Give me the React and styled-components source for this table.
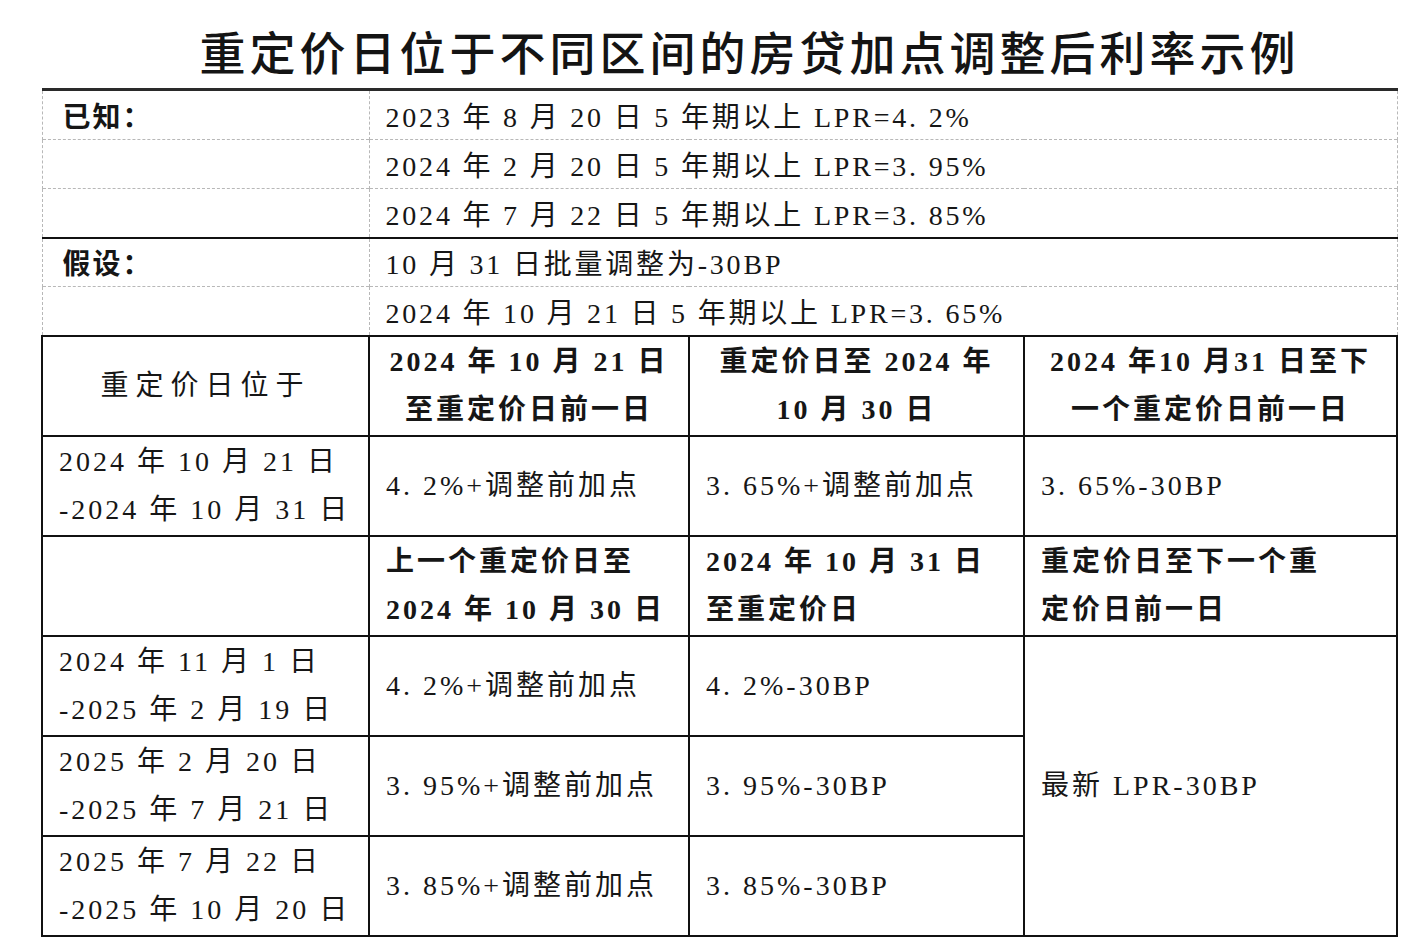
import React from "react";
import styled, { createGlobalStyle } from "styled-components";

const GlobalStyle = createGlobalStyle`
  html, body {
    margin: 0;
    padding: 0;
    background: #ffffff;
  }
  body {
    font-family: "Liberation Serif", "Noto Sans CJK SC", serif;
    color: #161616;
  }
`;

const known = [
  "2023 年 8 月 20 日 5 年期以上 LPR=4. 2%",
  "2024 年 2 月 20 日 5 年期以上 LPR=3. 95%",
  "2024 年 7 月 22 日 5 年期以上 LPR=3. 85%",
];

const assumed = ["10 月 31 日批量调整为-30BP", "2024 年 10 月 21 日 5 年期以上 LPR=3. 65%"];

function App() {
  return (
    <Page>
      <GlobalStyle />
      <Title>重定价日位于不同区间的房贷加点调整后利率示例</Title>
      <Sheet>
        <colgroup>
          <col style={{ width: 327 }} />
          <col style={{ width: 320 }} />
          <col style={{ width: 335 }} />
          <col style={{ width: 373 }} />
        </colgroup>
        <tbody>
          {known.map((text, i) => (
            <InfoRow key={text} $first={i === 0}>
              <LabelCell>{i === 0 ? "已知：" : ""}</LabelCell>
              <InfoCell colSpan={3}>{text}</InfoCell>
            </InfoRow>
          ))}
          {assumed.map((text, i) => (
            <InfoRow key={text} $strongTop={i === 0}>
              <LabelCell>{i === 0 ? "假设：" : ""}</LabelCell>
              <InfoCell colSpan={3}>{text}</InfoCell>
            </InfoRow>
          ))}

          <GridRow>
            <Cell $center $wide>重定价日位于</Cell>
            <Cell $center $bold>
              2024 年 10 月 21 日
              <br />
              至重定价日前一日
            </Cell>
            <Cell $center $bold>
              重定价日至 2024 年
              <br />
              10 月 30 日
            </Cell>
            <Cell $center $bold>
              2024 年10 月31 日至下
              <br />
              一个重定价日前一日
            </Cell>
          </GridRow>
          <GridRow>
            <Cell>
              2024 年 10 月 21 日
              <br />
              -2024 年 10 月 31 日
            </Cell>
            <Cell>4. 2%+调整前加点</Cell>
            <Cell>3. 65%+调整前加点</Cell>
            <Cell>3. 65%-30BP</Cell>
          </GridRow>
          <GridRow>
            <Cell />
            <Cell $bold>
              上一个重定价日至
              <br />
              2024 年 10 月 30 日
            </Cell>
            <Cell $bold>
              2024 年 10 月 31 日
              <br />
              至重定价日
            </Cell>
            <Cell $bold>
              重定价日至下一个重
              <br />
              定价日前一日
            </Cell>
          </GridRow>
          <GridRow>
            <Cell>
              2024 年 11 月 1 日
              <br />
              -2025 年 2 月 19 日
            </Cell>
            <Cell>4. 2%+调整前加点</Cell>
            <Cell>4. 2%-30BP</Cell>
            <Cell rowSpan={3}>最新 LPR-30BP</Cell>
          </GridRow>
          <GridRow>
            <Cell>
              2025 年 2 月 20 日
              <br />
              -2025 年 7 月 21 日
            </Cell>
            <Cell>3. 95%+调整前加点</Cell>
            <Cell>3. 95%-30BP</Cell>
          </GridRow>
          <GridRow>
            <Cell>
              2025 年 7 月 22 日
              <br />
              -2025 年 10 月 20 日
            </Cell>
            <Cell>3. 85%+调整前加点</Cell>
            <Cell>3. 85%-30BP</Cell>
          </GridRow>
        </tbody>
      </Sheet>
    </Page>
  );
}

export default App;

const Page = styled.div`
  width: 1417px;
  height: 950px;
  overflow: hidden;
  padding: 0 21px 0 41px;
  box-sizing: border-box;
`;

const Title = styled.h1`
  margin: 0;
  padding: 20px 0 0 62px;
  height: 88px;
  box-sizing: border-box;
  text-align: center;
  font-family: "Noto Sans CJK SC", sans-serif;
  font-size: 46px;
  font-weight: 500;
  letter-spacing: 4px;
  line-height: 60px;
  color: #141414;
`;

const Sheet = styled.table`
  width: 1355px;
  table-layout: fixed;
  border-collapse: collapse;
  font-size: 28px;
`;

const InfoRow = styled.tr`
  height: ${(p) => (p.$first ? 50 : 49)}px;

  & > td {
    border-top: ${(p) =>
      p.$first ? "3px solid #2a2a2a" : p.$strongTop ? "2px solid #111" : "1px dashed #b8b8b8"};
  }
`;

const LabelCell = styled.td`
  padding: 0 0 0 20px;
  border-left: 1px dashed #b8b8b8;
  border-right: 1px dashed #b8b8b8;
  font-weight: 700;
  letter-spacing: 2px;
  vertical-align: middle;
`;

const InfoCell = styled.td`
  padding: 0 0 0 16px;
  border-right: 1px dashed #b8b8b8;
  letter-spacing: 2.8px;
  vertical-align: middle;
  white-space: nowrap;
`;

const GridRow = styled.tr`
  height: 100px;
`;

const Cell = styled.td`
  border: 2px solid #111;
  padding: 0 8px 0 ${(p) => (p.$center ? 8 : 16)}px;
  text-align: ${(p) => (p.$center ? "center" : "left")};
  vertical-align: middle;
  line-height: 48px;
  font-weight: ${(p) => (p.$bold ? 700 : 400)};
  letter-spacing: ${(p) => (p.$wide ? 7 : 3)}px;
  white-space: nowrap;
`;
